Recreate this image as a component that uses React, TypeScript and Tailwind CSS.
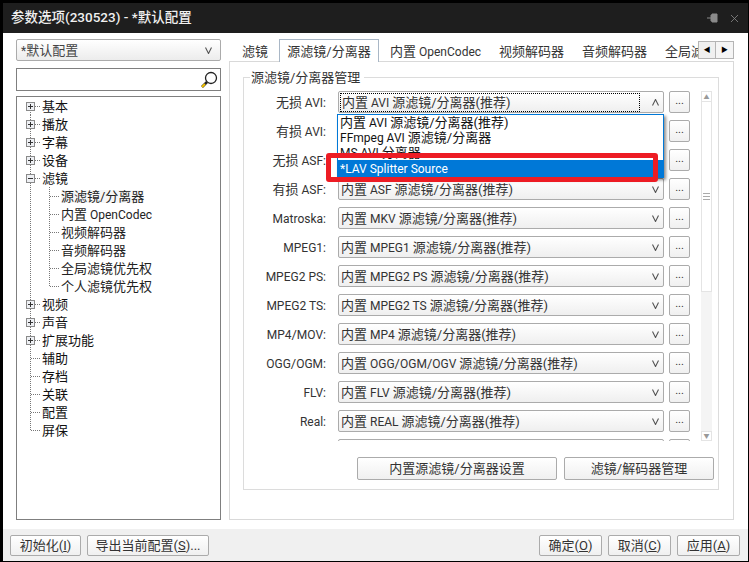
import { X } from "lucide-react";

const labels: [string, string][] = [
  ["无损 AVI:", "内置 AVI 源滤镜/分离器(推荐)"],
  ["有损 AVI:", "内置 AVI 源滤镜/分离器(推荐)"],
  ["无损 ASF:", "内置 ASF 源滤镜/分离器(推荐)"],
  ["有损 ASF:", "内置 ASF 源滤镜/分离器(推荐)"],
  ["Matroska:", "内置 MKV 源滤镜/分离器(推荐)"],
  ["MPEG1:", "内置 MPEG1 源滤镜/分离器(推荐)"],
  ["MPEG2 PS:", "内置 MPEG2 PS 源滤镜/分离器(推荐)"],
  ["MPEG2 TS:", "内置 MPEG2 TS 源滤镜/分离器(推荐)"],
  ["MP4/MOV:", "内置 MP4 源滤镜/分离器(推荐)"],
  ["OGG/OGM:", "内置 OGG/OGM/OGV 源滤镜/分离器(推荐)"],
  ["FLV:", "内置 FLV 源滤镜/分离器(推荐)"],
  ["Real:", "内置 REAL 源滤镜/分离器(推荐)"],
  ["", ""],
];

const tree: { text: string; kind: "plus" | "minus" | "leaf" | "child"; last?: boolean; active?: boolean }[] = [
  { text: "基本", kind: "plus" },
  { text: "播放", kind: "plus" },
  { text: "字幕", kind: "plus" },
  { text: "设备", kind: "plus" },
  { text: "滤镜", kind: "minus" },
  { text: "源滤镜/分离器", kind: "child", active: true },
  { text: "内置 OpenCodec", kind: "child" },
  { text: "视频解码器", kind: "child" },
  { text: "音频解码器", kind: "child" },
  { text: "全局滤镜优先权", kind: "child" },
  { text: "个人滤镜优先权", kind: "child", last: true },
  { text: "视频", kind: "plus" },
  { text: "声音", kind: "plus" },
  { text: "扩展功能", kind: "plus" },
  { text: "辅助", kind: "leaf" },
  { text: "存档", kind: "leaf" },
  { text: "关联", kind: "leaf" },
  { text: "配置", kind: "leaf" },
  { text: "屏保", kind: "leaf", last: true },
];

// latin runs sit a bit smaller than the CJK ones in the original UI font
function Mixed({ text }: { text: string }) {
  return (
    <>
      {text.split(/([A-Za-z0-9 :*]+)/).map((part, i) =>
        i % 2 === 1 ? (
          <span key={i} className="text-[12px]">{part}</span>
        ) : (
          part
        ),
      )}
    </>
  );
}

function Chevron({ up }: { up?: boolean }) {
  return (
    <svg width="7" height="7" viewBox="0 0 7 7" className="shrink-0">
      <path d={up ? "M0.5 6.5 L3.5 0.5 L6.5 6.5" : "M0.5 0.5 L3.5 6.5 L6.5 0.5"} fill="none" stroke="#555" strokeWidth="1.1" />
    </svg>
  );
}

function TreeRow({ item, first }: { item: (typeof tree)[number]; first: boolean }) {
  const isChild = item.kind === "child";
  return (
    <div className="flex h-[18px] items-center">
      <svg width="44" height="18" className="shrink-0">
        {isChild ? (
          <>
            <line x1="13.5" y1="0" x2="13.5" y2="18" stroke="#777" strokeDasharray="1 1" />
            <line x1="32.5" y1="0" x2="32.5" y2={item.last ? 9 : 18} stroke="#777" strokeDasharray="1 1" />
            <line x1="33" y1="9.5" x2="43" y2="9.5" stroke="#777" strokeDasharray="1 1" />
          </>
        ) : (
          <>
            <line x1="13.5" y1={first ? 9 : 0} x2="13.5" y2={item.last ? 9 : 18} stroke="#777" strokeDasharray="1 1" />
            <line x1="14" y1="9.5" x2="23" y2="9.5" stroke="#777" strokeDasharray="1 1" />
            {item.kind !== "leaf" && (
              <>
                <rect x="9.5" y="5.5" width="8" height="8" fill="#eef0f4" stroke="#8a8a8a" />
                <line x1="11" y1="9.5" x2="16" y2="9.5" stroke="#333" />
                {item.kind === "plus" && <line x1="13.5" y1="7" x2="13.5" y2="12" stroke="#333" />}
              </>
            )}
          </>
        )}
      </svg>
      <span className={isChild ? (item.active ? "bg-[#f6f6f6] text-[#222]" : "text-[#222]") : "-ml-[19px] text-[#111]"}>
        <Mixed text={item.text} />
      </span>
    </div>
  );
}

function Btn({ className, children }: { className: string; children: React.ReactNode }) {
  return (
    <button className={`flex items-center justify-center rounded-[2px] border border-[#ababab] bg-gradient-to-b from-white to-[#f0f0f0] text-[#333] ${className}`}>
      {children}
    </button>
  );
}

export default function App() {
  return (
    <div className="flex h-[562px] w-[749px] flex-col overflow-hidden bg-black pb-px pl-[3px] pr-px pt-[3px] font-['Roboto','Noto_Sans_CJK_SC',sans-serif] text-[13px] leading-none">
      <div className="flex h-[30px] shrink-0 items-center justify-between bg-[#1e1e1e] pl-2 pr-[7px]">
        <span className="text-[13.5px] font-medium text-[#f0f0f0]">参数选项(230523) - *默认配置</span>
        <div className="flex items-center gap-[9px] text-[#8a8a8a]">
          <svg width="12" height="12" viewBox="0 0 12 12">
            <path d="M0 6 H4 M4 3 H5 V2 H10 V10 H5 V9 H4 Z" fill="#8a8a8a" stroke="#8a8a8a" />
          </svg>
          <X size={13} strokeWidth={1.5} />
        </div>
      </div>

      <div className="flex min-h-0 flex-1 bg-white pb-[9px] pl-[13px] pr-[14px] pt-[6px]">
        <div className="flex w-[205px] shrink-0 flex-col">
          <div className="flex h-[22px] shrink-0 items-center justify-between rounded-[2px] border border-[#ababab] bg-gradient-to-b from-white to-[#ececec] pl-1 pr-[8px] text-[#444]">
            <span><Mixed text="*默认配置" /></span>
            <Chevron />
          </div>
          <div className="mt-[7px] flex h-[23px] shrink-0 items-center justify-end border border-[#7f7f7f] pr-[2px]">
            <svg width="18" height="18" viewBox="0 0 18 18">
              <circle cx="11" cy="7" r="5.5" fill="#fff" stroke="#222" strokeWidth="1.3" />
              <line x1="7" y1="11" x2="2" y2="16" stroke="#222" strokeWidth="2.6" />
              <line x1="5" y1="13" x2="2" y2="16" stroke="#f5c400" strokeWidth="2" />
            </svg>
          </div>
          <div className="mt-[5px] min-h-0 flex-1 border border-[#7f7f7f]">
            {tree.map((item, i) => (
              <TreeRow key={item.text} item={item} first={i === 0} />
            ))}
          </div>
        </div>

        <div className="ml-2 flex min-w-0 flex-1 flex-col">
          <div className="flex h-[23px] shrink-0 items-end overflow-hidden text-[#333]">
            <span className="flex h-[21px] w-[50px] shrink-0 items-center pl-[13px]">滤镜</span>
            <span className="relative z-10 flex h-[23px] w-[100px] shrink-0 items-center justify-center border border-b-0 border-[#a9b7c6] bg-white">源滤镜/分离器</span>
            <span className="flex h-[21px] w-[120px] shrink-0 items-center pl-[11px]">
              <span><Mixed text="内置 OpenCodec" /></span>
            </span>
            <span className="flex h-[21px] w-[83px] shrink-0 items-center">视频解码器</span>
            <span className="flex h-[21px] w-[83px] shrink-0 items-center">音频解码器</span>
            <span className="h-[21px] w-[33px] shrink-0 overflow-hidden whitespace-nowrap pt-1">全局滤</span>
            <div className="mb-[3px] flex h-[18px] shrink-0">
              <div className="flex w-[18px] items-center justify-center border border-[#b5b5b5] bg-[#f0f0f0] text-[7px] text-black">◀</div>
              <div className="flex w-[18px] items-center justify-center border border-l-0 border-[#b5b5b5] bg-[#f5f5f5] text-[7px] text-black">▶</div>
            </div>
          </div>

          <div className="-mt-px flex min-h-0 flex-1 flex-col border border-[#d9d9d9] pb-[29px] pl-[13px] pr-[14px] pt-[15px]">
            <div className="flex min-h-0 flex-1 flex-col border border-[#dcdcdc] pb-[8px]">
              <div className="-mt-[7px] ml-[6px] w-fit bg-white pl-[1px] pr-[4px] text-[#333]">源滤镜/分离器管理</div>
              <div className="mt-[7px] flex h-[350px] shrink-0">
                <div className="flex w-[446px] shrink-0 flex-col gap-[7px] overflow-hidden">
                  {labels.map(([label, value], i) => (
                    <div key={i} className="flex h-[22px] shrink-0 items-center">
                      <span className="w-[82px] shrink-0 text-right text-[#333]"><Mixed text={label} /></span>
                      <div className={`ml-3 flex h-[22px] w-[326px] shrink-0 items-center justify-between rounded-[2px] border border-[#ababab] bg-gradient-to-b from-white to-[#efefef] pr-[4px] text-[#333] ${i === 0 ? "pl-[1px]" : "pl-[2px]"}`}>
                        {i === 0 ? (
                          <span className="flex h-[19px] w-[300px] items-center border border-dotted border-black pl-[1px]">
                            <span><Mixed text={value} /></span>
                          </span>
                        ) : (
                          <span><Mixed text={value} /></span>
                        )}
                        <Chevron up={i === 0} />
                      </div>
                      <Btn className="ml-[5px] h-[22px] w-[21px] shrink-0 pb-[3px] text-[11px]">...</Btn>
                    </div>
                  ))}
                </div>
                <div className="ml-[11px] flex w-[11px] shrink-0 flex-col bg-[#f4f4f4] text-[6px] text-[#999]">
                  <div className="flex h-[11px] shrink-0 items-center justify-center border border-[#e4e4e4] bg-white">▲</div>
                  <div className="flex h-[190px] shrink-0 items-center justify-center border-x border-b border-[#e4e4e4] bg-white">
                    <div className="flex h-[7px] w-[7px] flex-col justify-between">
                      <div className="h-px bg-[#aaa]" />
                      <div className="h-px bg-[#aaa]" />
                      <div className="h-px bg-[#aaa]" />
                    </div>
                  </div>
                  <div className="flex-1" />
                  <div className="flex h-[10px] shrink-0 items-center justify-center border border-[#e4e4e4] bg-white">▼</div>
                </div>
              </div>
              <div className="mt-4 flex justify-end gap-[7px] pr-[4px]">
                <Btn className="h-[23px] w-[200px]">内置源滤镜/分离器设置</Btn>
                <Btn className="h-[23px] w-[150px]">滤镜/解码器管理</Btn>
              </div>
            </div>
          </div>
        </div>
      </div>

      <div className="flex h-[32px] shrink-0 items-center justify-between bg-[#f0f0f0] pl-[7px] pr-[8px]">
        <div className="flex gap-[6px]">
          <Btn className="h-[21px] w-[71px]">初始化(<span className="underline">I</span>)</Btn>
          <Btn className="h-[21px] w-[122px]">导出当前配置(<span className="underline">S</span>)...</Btn>
        </div>
        <div className="flex gap-[6px]">
          <Btn className="h-[21px] w-[63px]">确定(<span className="underline">O</span>)</Btn>
          <Btn className="h-[21px] w-[63px]">取消(<span className="underline">C</span>)</Btn>
          <Btn className="h-[21px] w-[63px]">应用(<span className="underline">A</span>)</Btn>
        </div>
      </div>

      {/* open combo list, lies over the rows */}
      <div className="absolute left-[337px] top-[114px] h-[64px] w-[327px] overflow-hidden border border-[#0078d7] bg-white text-[13px] leading-[15px] text-[#111] shadow-[2px_2px_3px_rgba(0,0,0,0.45)]">
        <div className="h-[15px] whitespace-nowrap pl-[2px]"><Mixed text="内置 AVI 源滤镜/分离器(推荐)" /></div>
        <div className="h-[15px] whitespace-nowrap pl-[2px]"><Mixed text="FFmpeg AVI 源滤镜/分离器" /></div>
        <div className="h-[15px] whitespace-nowrap pl-[2px]"><Mixed text="MS AVI 分离器" /></div>
        <div className="h-[17px] whitespace-nowrap bg-[#0078d7] pl-[2px] leading-[17px] text-white"><Mixed text="*LAV Splitter Source" /></div>
      </div>
      {/* red annotation box */}
      <div className="absolute left-[326px] top-[153px] h-[29px] w-[332px] rounded-[3px] border-[5px] border-[#ed1c24]" />
    </div>
  );
}
